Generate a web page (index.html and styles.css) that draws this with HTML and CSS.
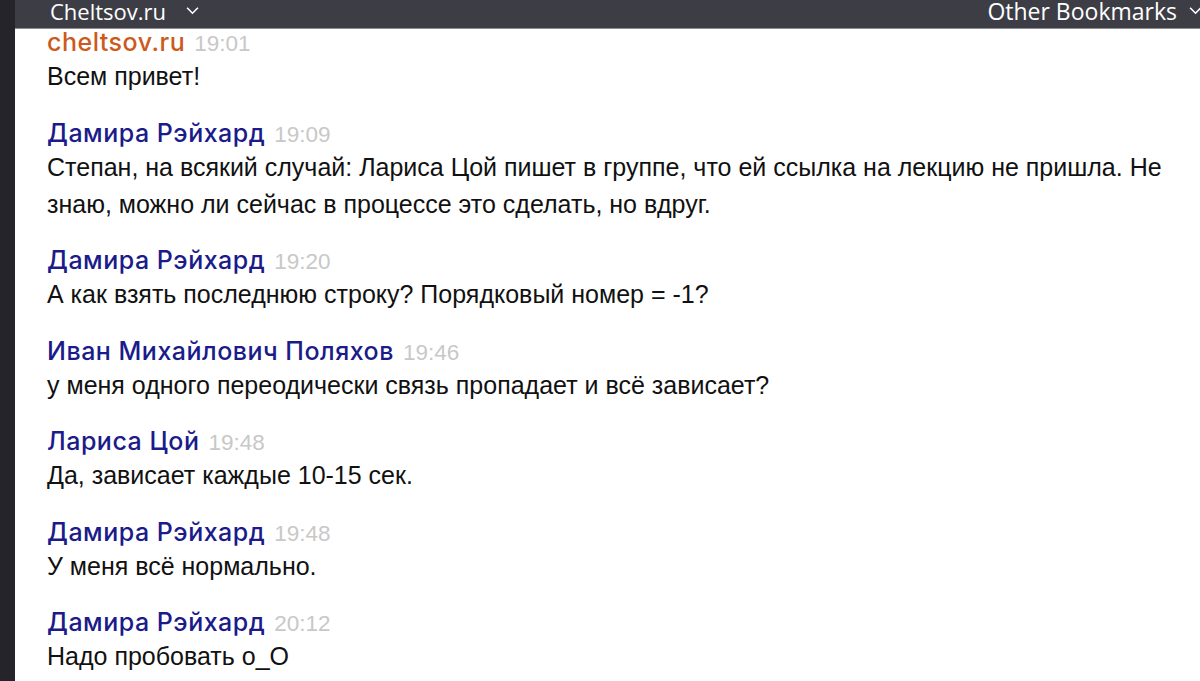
FILE: index.html
```html
<!DOCTYPE html>
<html lang="ru">
<head>
<meta charset="utf-8">
<link rel="stylesheet" href="styles.css">
</head>
<body>
<div class="app">
  <div class="side"></div>
  <div class="main">
    <div class="bar">
      <div class="bm">Cheltsov.ru <svg class="chev" viewBox="0 0 12 8" width="13" height="9"><path d="M1 1.5 L6 6.5 L11 1.5" fill="none" stroke="#fff" stroke-width="1.5"/></svg></div>
      <div class="bm other">Other Bookmarks <svg class="chev" viewBox="0 0 12 8" width="13" height="9"><path d="M1 1.5 L6 6.5 L11 1.5" fill="none" stroke="#fff" stroke-width="1.5"/></svg></div>
    </div>
    <div class="chat">
      <div class="msg">
        <div class="head"><span class="name owner">cheltsov.ru</span><span class="time">19:01</span></div>
        <div class="text">Всем привет!</div>
      </div>
      <div class="msg">
        <div class="head"><span class="name">Дамира Рэйхард</span><span class="time">19:09</span></div>
        <div class="text">Степан, на всякий случай: Лариса Цой пишет в группе, что ей ссылка на лекцию не пришла. Не знаю, можно ли сейчас в процессе это сделать, но вдруг.</div>
      </div>
      <div class="msg">
        <div class="head"><span class="name">Дамира Рэйхард</span><span class="time">19:20</span></div>
        <div class="text">А как взять последнюю строку? Порядковый номер = -1?</div>
      </div>
      <div class="msg">
        <div class="head"><span class="name">Иван Михайлович Поляхов</span><span class="time">19:46</span></div>
        <div class="text">у меня одного переодически связь пропадает и всё зависает?</div>
      </div>
      <div class="msg">
        <div class="head"><span class="name">Лариса Цой</span><span class="time">19:48</span></div>
        <div class="text">Да, зависает каждые 10-15 сек.</div>
      </div>
      <div class="msg">
        <div class="head"><span class="name">Дамира Рэйхард</span><span class="time">19:48</span></div>
        <div class="text">У меня всё нормально.</div>
      </div>
      <div class="msg">
        <div class="head"><span class="name">Дамира Рэйхард</span><span class="time">20:12</span></div>
        <div class="text">Надо пробовать о_О</div>
      </div>
    </div>
  </div>
</div>
</body>
</html>
```
FILE: styles.css
```css
* { box-sizing: border-box; }
html, body { margin: 0; padding: 0; background: #fff; }
body { width: 1200px; height: 681px; overflow: hidden; }
.app { display: flex; height: 681px; }
.side { width: 15px; flex: none; background: #24242a; }
.main { flex: 1; display: flex; flex-direction: column; min-width: 0; }
.bar {
  height: 29px; flex: none;
  background: #3d3d45;
  border-bottom: 1px solid #8c8c92;
  display: flex; justify-content: space-between; align-items: flex-start;
  padding: 0 0 0 35px;
  font-family: "Open Sans", "DejaVu Sans", sans-serif;
  font-size: 22px; color: #fff;
  overflow: hidden;
}
.bm { display: flex; align-items: center; gap: 20px; line-height: 23px; white-space: nowrap; }
.bm.other { margin-right: -2px; font-size: 23px; gap: 12px; }
.chev { margin-top: -3px; }
.chat {
  padding: 0 0 0 32px;
  font-family: "Liberation Sans", Arial, sans-serif;
  font-size: 25px;
  color: #111;
}
.msg { margin-bottom: 24.5px; }
.head { height: 29px; display: flex; align-items: baseline; gap: 9px; line-height: 27px; white-space: nowrap; }
.name { color: #1b1b8a; font-family: Inter, "Liberation Sans", sans-serif; font-weight: 500; font-size: 25px; letter-spacing: 0.5px; }
.name.owner { color: #cc5a1c; }
.time { color: #c8c8c8; font-size: 22.5px; }
.text { line-height: 37px; }
```
